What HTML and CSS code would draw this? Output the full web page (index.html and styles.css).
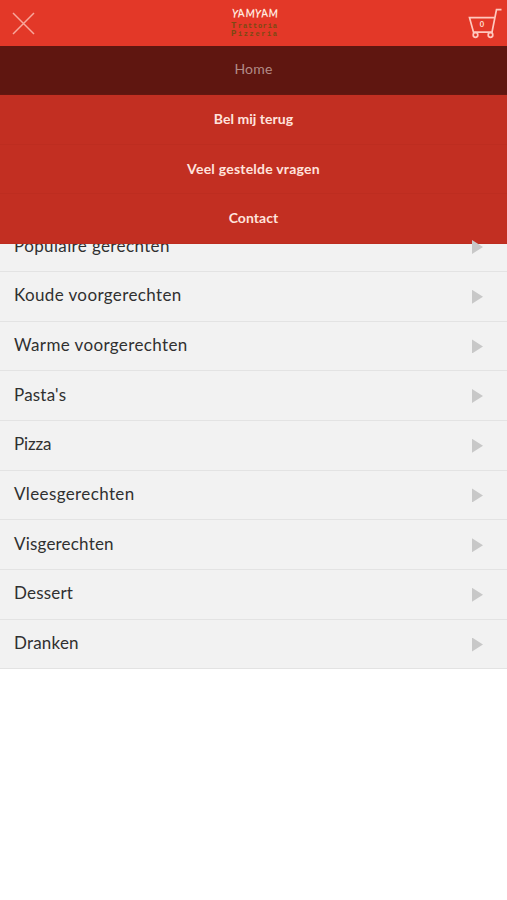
FILE: index.html
```html
<!DOCTYPE html>
<html lang="nl">
<head>
<meta charset="utf-8">
<title>YamYam</title>
<link rel="stylesheet" href="styles.css">
</head>
<body>
<header class="topbar">
  <svg class="close" width="24" height="24" viewBox="0 0 24 24"><path d="M2 2l21 21M23 2l-21 21"/></svg>
  <svg class="logo" width="54" height="34" viewBox="0 0 54 34">
    <text class="logo-name" transform="scale(.84 1)" x="5 13 22 32.500 41 49.500" y="12 12.500 12 12 12.500 12" rotate="10 -6 4 10 -6 4">YAMYAM</text>
    <text class="logo-sub" y="22.500"><tspan class="initial" x="4">T</tspan><tspan x="11" textLength="39">rattoria</tspan></text>
    <text class="logo-sub" y="31"><tspan class="initial" x="4">P</tspan><tspan x="11" textLength="39">izzeria</tspan></text>
  </svg>
  <svg class="cart" width="36" height="36" viewBox="0 0 36 36">
    <path d="M33.500 4.700h-5l-4.500 22.500H5.500L1.500 12.700H26.500"/>
    <circle cx="7.500" cy="30" r="2.300"/><circle cx="22.500" cy="30" r="2.300"/>
    <text x="14" y="21.500">0</text>
  </svg>
</header>
<nav class="menu">
  <a class="menu-item active"><span>Home</span></a>
  <a class="menu-item"><span>Bel mij terug</span></a>
  <a class="menu-item loose"><span>Veel gestelde vragen</span></a>
  <a class="menu-item"><span>Contact</span></a>
</nav>
<main class="list">
  <a class="row wide"><span>Populaire gerechten</span><i class="arrow"></i></a>
  <a class="row wide"><span>Koude voorgerechten</span><i class="arrow"></i></a>
  <a class="row wide"><span>Warme voorgerechten</span><i class="arrow"></i></a>
  <a class="row"><span>Pasta's</span><i class="arrow"></i></a>
  <a class="row tight"><span>Pizza</span><i class="arrow"></i></a>
  <a class="row wide"><span>Vleesgerechten</span><i class="arrow"></i></a>
  <a class="row"><span>Visgerechten</span><i class="arrow"></i></a>
  <a class="row"><span>Dessert</span><i class="arrow"></i></a>
  <a class="row"><span>Dranken</span><i class="arrow"></i></a>
</main>
</body>
</html>
```
FILE: styles.css
```css
* { box-sizing: border-box; }
body { margin: 0; background: #fff; font-family: Lato, "Liberation Sans", sans-serif; }
.topbar {
  height: 45.500px; background: #e33828;
  display: grid; grid-template-columns: 1fr 54px 1fr; align-items: start;
}
.close { margin: 11px 0 0 11px; fill: none; stroke: #f8a79c; stroke-width: 1.500; }
.logo { margin-top: 5px; }
.logo-name { font: bold 11.500px Lato, sans-serif; fill: #ffe9df; }
.logo-sub { font: bold 7px "Liberation Mono", monospace; fill: #7c4912; }
.initial { font-size: 9px; }
.cart { margin: 5px 3px 0 0; justify-self: end; fill: none; stroke: #ffc9bf; stroke-width: 1.700; }
.cart text { font: bold 7.500px Lato, sans-serif; fill: #ffe0d8; stroke: none; text-anchor: middle; }
.menu { position: absolute; top: 45.500px; left: 0; width: 100%; background: #c22f22; }
.menu-item {
  height: 49.650px; display: flex; justify-content: center; align-items: center;
  padding-bottom: 2px; border-bottom: 1px solid #bd2d20;
  color: #ffe3dd; font-size: 14px; font-weight: bold; letter-spacing: 0.050px;
}
.loose { letter-spacing: 0.230px; }
.active { background: #5f1610; border-color: #651710; color: #b28b87; font-weight: normal; letter-spacing: 0.200px; }
.list { margin-top: 176.700px; }
.row {
  height: 49.700px; display: flex; justify-content: space-between; align-items: center;
  padding: 0 24px 3px 14px; background: #f2f2f2; border-bottom: 1px solid #e3e3e3;
  color: #303030; font-size: 17px; letter-spacing: 0.200px;
}
.wide { letter-spacing: 0.380px; }
.tight { letter-spacing: -0.150px; }
.arrow {
  width: 11px; height: 14px; margin-top: 4px; background: #c8c8c8;
  clip-path: polygon(0 0, 100% 50%, 0 100%);
}
```
